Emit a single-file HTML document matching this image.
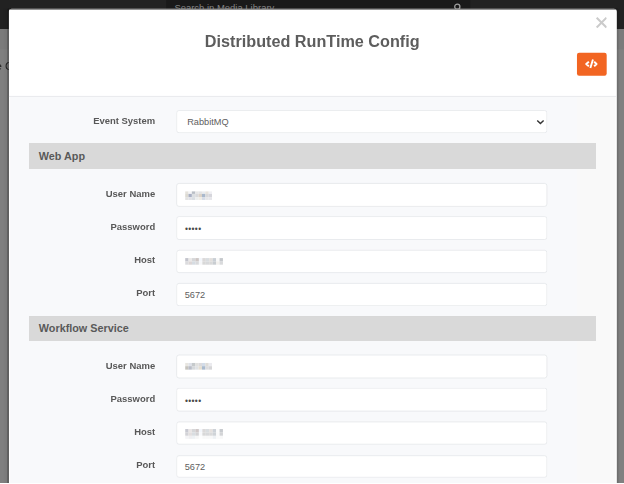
<!DOCTYPE html>
<html lang="en">
<head>
<meta charset="utf-8">
<title>Distributed RunTime Config</title>
<style>
*{box-sizing:border-box;margin:0;padding:0}
html,body{width:624px;height:484px;overflow:hidden}
body{position:relative;background:#808080;font-family:"Liberation Sans",Arial,sans-serif;color:#555}
#wrap{position:absolute;left:0;top:0;width:923.62px;height:716.40px;transform:scale(0.6756);transform-origin:0 0;overflow:hidden}
.abs{position:absolute}
#topbar{left:0;top:0;width:923.62px;height:43px;background:#222}
#subbar{left:0;top:43px;width:923.62px;height:30px;background:#7b7b7b}
#search{left:245.71px;top:0;width:449.97px;height:29.60px;background:#191919;color:#828282;font-size:14.00px;line-height:17.76px}
#search span{position:absolute;left:12.43px;top:2.96px;white-space:nowrap}
#crumb{left:-6.22px;top:86.59px;width:88.81px;text-align:left;font-size:16.28px;line-height:20.72px;color:#1d1d1d;white-space:nowrap}
#shadow{left:4.44px;top:13.32px;width:917.70px;height:703.08px;background:linear-gradient(to right,rgba(0,0,0,0) 0,rgba(0,0,0,.05) 6.51px,rgba(0,0,0,.28) 7.25px,rgba(0,0,0,.28) 8.88px,rgba(0,0,0,0) 8.88px,rgba(0,0,0,0) 908.23px,rgba(0,0,0,.2) 908.53px,rgba(0,0,0,.12) 910.30px,rgba(0,0,0,0) 913.26px)}
#modal{left:13px;top:13px;width:900px;height:710px;background:linear-gradient(to right,#707070 0,#707070 .25px,#fff .4px);border-radius:4.5px 4.5px 0 0;overflow:hidden}
#topedge{left:0;top:0;width:900px;height:1px;background:#1a1a1a}
#shadowtop{left:12px;top:11.6px;width:902px;height:1.4px;background:rgba(0,0,0,.22)}
#body{left:2px;top:130px;width:839px;height:580px;background:#f8f9fb}
#body2{left:841px;top:130px;width:57px;height:580px;background:#f9f9f9}
#hline{left:0;top:129px;width:900px;height:1px;background:#dfe1e4}
#title{left:-0.89px;top:32.56px;width:900px;text-align:center;font-weight:bold;font-size:23.98px;line-height:29.60px;color:#5d5d5d;white-space:nowrap}
#close{left:868.56px;top:11.84px;width:16.87px;height:16.87px}
#codebtn{left:841.03px;top:65.13px;width:43.52px;height:34.19px;background:#f26522;border-radius:3.26px}
.band{left:30px;width:839px;background:#d9d9d9;font-weight:bold;font-size:15.99px;color:#595959;padding-left:14.51px;white-space:nowrap}
.lbl{left:0;width:216.70px;text-align:right;font-weight:bold;font-size:14.00px;line-height:31.38px;color:#585858;white-space:nowrap}
.inp{left:248px;width:549px;background:#fff;border:1px solid #dfe2e6;border-radius:4px}
.val{font-size:13.62px;line-height:17.76px;color:#5e5e5e;white-space:nowrap}
.pw{color:#4a4a4a;font-size:12.43px;letter-spacing:0.55px}
.mos{filter:blur(0.52px)}
#bottomline{left:0;top:483px;width:624px;height:1px;background:#fff}
</style>
</head>
<body>
<div id="wrap">
<div id="topbar" class="abs"></div>
<div id="subbar" class="abs"></div>
<div id="search" class="abs"><span>Search in Media Library</span>
<svg class="abs" style="left:421.85px;top:1.48px;width:17.76px;height:17.76px" viewBox="0 0 12 12"><circle cx="6" cy="6" r="2.6" fill="none" stroke="#9c9c9c" stroke-width="1.3"/><path d="M8 8 L10.5 10.5" stroke="#9c9c9c" stroke-width="1.4"/></svg>
</div>
<div id="crumb" class="abs">e Config</div>
<div id="shadow" class="abs"></div>

<div id="shadowtop" class="abs"></div>
<div id="modal" class="abs">
  <div id="topedge" class="abs"></div>
  <div id="body" class="abs"></div>
  <div id="body2" class="abs"></div>
  <div id="hline" class="abs"></div>
  <div id="title" class="abs">Distributed RunTime Config</div>
  <svg id="close" class="abs" viewBox="0 0 11.4 11.4"><path d="M0.8 0.8 L10.6 10.6 M10.6 0.8 L0.8 10.6" stroke="#cbcbcb" stroke-width="2" fill="none"/></svg>
  <div id="codebtn" class="abs">
    <svg class="abs" style="left:0;top:0;width:43.52px;height:34.19px" viewBox="0 0 29.4 23.1"><path d="M11.9 9.0 L9.2 11.3 L11.9 13.6 M17.2 9.0 L19.6 11.3 L17.2 13.6 M16.0 6.9 L13.4 15.4" stroke="#fff" stroke-width="1.9" fill="none" stroke-linejoin="round"/></svg>
  </div>
  <div class="lbl abs" style="top:149.67px">Event System</div>
  <div class="inp abs" style="top:150px;height:34px"></div>
  <div class="val abs" style="left:264.09px;top:158.70px">RabbitMQ</div>
  <div class="band abs" style="top:199px;height:38px;line-height:40px">Web App</div>
  <div class="lbl abs" style="top:257.87px">User Name</div>
  <div class="inp abs" style="top:258px;height:35px"></div>
  <div class="lbl abs" style="top:306.87px">Password</div>
  <div class="inp abs" style="top:307px;height:35px"></div>
  <div class="val abs pw" style="left:260.69px;top:317.53px">•••••</div>
  <div class="lbl abs" style="top:356.31px">Host</div>
  <div class="inp abs" style="top:357px;height:34px"></div>
  <div class="lbl abs" style="top:405.30px">Port</div>
  <div class="inp abs" style="top:406px;height:34px"></div>
  <div class="val abs" style="left:260.39px;top:414.92px">5672</div>
  <div class="band abs" style="top:455px;height:37px;line-height:37px">Workflow Service</div>
  <div class="lbl abs" style="top:512.76px">User Name</div>
  <div class="inp abs" style="top:512px;height:35px"></div>
  <div class="lbl abs" style="top:561.90px">Password</div>
  <div class="inp abs" style="top:561px;height:35px"></div>
  <div class="val abs pw" style="left:260.69px;top:572.85px">•••••</div>
  <div class="lbl abs" style="top:611.34px">Host</div>
  <div class="inp abs" style="top:611px;height:34px"></div>
  <div class="lbl abs" style="top:659.89px">Port</div>
  <div class="inp abs" style="top:661px;height:33px"></div>
  <div class="val abs" style="left:260.39px;top:668.77px">5672</div>

  <svg class="abs" style="left:780.82px;top:163.74px;width:11.84px;height:8.88px" viewBox="0 0 8 6"><path d="M0.8 0.8 L4 4 L7.2 0.8" stroke="#333" stroke-width="1.4" fill="none"/></svg>
  <svg class="abs mos" style="left:260.83px;top:269.72px;width:39.91px;height:12.88px" viewBox="0 0 26.96 8.70"><rect x="0.00" y="0.00" width="3.42" height="2.75" fill="#e4e2dc"/><rect x="3.37" y="0.00" width="3.42" height="2.75" fill="#f4f4f6"/><rect x="6.74" y="0.00" width="3.42" height="2.75" fill="#b9bec6"/><rect x="10.11" y="0.00" width="3.42" height="2.75" fill="#e6e6e6"/><rect x="13.48" y="0.00" width="3.42" height="2.75" fill="#e3e3e5"/><rect x="16.85" y="0.00" width="3.42" height="2.75" fill="#e9ebee"/><rect x="20.22" y="0.00" width="3.42" height="2.75" fill="#e6e2dc"/><rect x="23.59" y="0.00" width="3.42" height="2.75" fill="#f0f0f4"/><rect x="0.00" y="2.70" width="3.42" height="3.35" fill="#dddbd3"/><rect x="3.37" y="2.70" width="3.42" height="3.35" fill="#a9b0c4"/><rect x="6.74" y="2.70" width="3.42" height="3.35" fill="#dcdfe2"/><rect x="10.11" y="2.70" width="3.42" height="3.35" fill="#d9dadc"/><rect x="13.48" y="2.70" width="3.42" height="3.35" fill="#dcd3c9"/><rect x="16.85" y="2.70" width="3.42" height="3.35" fill="#a9b8cc"/><rect x="20.22" y="2.70" width="3.42" height="3.35" fill="#d8d8da"/><rect x="23.59" y="2.70" width="3.42" height="3.35" fill="#d6d6dc"/><rect x="0.00" y="6.00" width="3.42" height="2.75" fill="#e2e2e2"/><rect x="3.37" y="6.00" width="3.42" height="2.75" fill="#e0e1e6"/><rect x="6.74" y="6.00" width="3.42" height="2.75" fill="#d8dde2"/><rect x="10.11" y="6.00" width="3.42" height="2.75" fill="#eceeed"/><rect x="13.48" y="6.00" width="3.42" height="2.75" fill="#efece6"/><rect x="16.85" y="6.00" width="3.42" height="2.75" fill="#d5dbe6"/><rect x="20.22" y="6.00" width="3.42" height="2.75" fill="#e6e6e8"/><rect x="23.59" y="6.00" width="3.42" height="2.75" fill="#e6e6ea"/></svg>
  <svg class="abs mos" style="left:260.83px;top:369.03px;width:56.08px;height:10.07px" viewBox="0 0 37.89 6.80"><rect x="0.00" y="0.00" width="3.49" height="3.45" fill="#c3c4cc"/><rect x="3.44" y="0.00" width="3.49" height="3.45" fill="#ebe9e8"/><rect x="6.89" y="0.00" width="3.49" height="3.45" fill="#d6d7d9"/><rect x="10.33" y="0.00" width="3.49" height="3.45" fill="#cdc6c4"/><rect x="13.78" y="0.00" width="3.49" height="3.45" fill="#f3f6fb"/><rect x="17.22" y="0.00" width="3.49" height="3.45" fill="#dbd9d9"/><rect x="20.67" y="0.00" width="3.49" height="3.45" fill="#d9dde0"/><rect x="24.11" y="0.00" width="3.49" height="3.45" fill="#e3dfdc"/><rect x="27.56" y="0.00" width="3.49" height="3.45" fill="#c9cfd5"/><rect x="31.00" y="0.00" width="3.49" height="3.45" fill="#fafafa"/><rect x="34.45" y="0.00" width="3.49" height="3.45" fill="#c5c8cc"/><rect x="0.00" y="3.40" width="3.49" height="3.45" fill="#dcdcde"/><rect x="3.44" y="3.40" width="3.49" height="3.45" fill="#dcd6d6"/><rect x="6.89" y="3.40" width="3.49" height="3.45" fill="#d6dce2"/><rect x="10.33" y="3.40" width="3.49" height="3.45" fill="#d9dadc"/><rect x="13.78" y="3.40" width="3.49" height="3.45" fill="#f6f7f9"/><rect x="17.22" y="3.40" width="3.49" height="3.45" fill="#d8d8d8"/><rect x="20.67" y="3.40" width="3.49" height="3.45" fill="#d8d9db"/><rect x="24.11" y="3.40" width="3.49" height="3.45" fill="#d9d9d9"/><rect x="27.56" y="3.40" width="3.49" height="3.45" fill="#c9cdd1"/><rect x="31.00" y="3.40" width="3.49" height="3.45" fill="#f3f1ee"/><rect x="34.45" y="3.40" width="3.49" height="3.45" fill="#d9dadc"/></svg>
  <svg class="abs mos" style="left:260.83px;top:524.45px;width:39.91px;height:10.07px" viewBox="0 0 26.96 6.80"><rect x="0.00" y="0.00" width="3.42" height="3.45" fill="#e8e6e1"/><rect x="3.37" y="0.00" width="3.42" height="3.45" fill="#dfe2e9"/><rect x="6.74" y="0.00" width="3.42" height="3.45" fill="#c6cacc"/><rect x="10.11" y="0.00" width="3.42" height="3.45" fill="#e1e1df"/><rect x="13.48" y="0.00" width="3.42" height="3.45" fill="#dcdbdd"/><rect x="16.85" y="0.00" width="3.42" height="3.45" fill="#d3dce8"/><rect x="20.22" y="0.00" width="3.42" height="3.45" fill="#dedcd8"/><rect x="23.59" y="0.00" width="3.42" height="3.45" fill="#ebebef"/><rect x="0.00" y="3.40" width="3.42" height="3.45" fill="#c6c4be"/><rect x="3.37" y="3.40" width="3.42" height="3.45" fill="#b9bdc8"/><rect x="6.74" y="3.40" width="3.42" height="3.45" fill="#d6d9dc"/><rect x="10.11" y="3.40" width="3.42" height="3.45" fill="#dfe2e5"/><rect x="13.48" y="3.40" width="3.42" height="3.45" fill="#e6dfd2"/><rect x="16.85" y="3.40" width="3.42" height="3.45" fill="#a9bace"/><rect x="20.22" y="3.40" width="3.42" height="3.45" fill="#dcdcde"/><rect x="23.59" y="3.40" width="3.42" height="3.45" fill="#d6d6d8"/></svg>
  <svg class="abs mos" style="left:260.83px;top:622.14px;width:56.08px;height:14.51px" viewBox="0 0 37.89 9.80"><rect x="0.00" y="0.00" width="3.49" height="3.45" fill="#c8c9d1"/><rect x="3.44" y="0.00" width="3.49" height="3.45" fill="#eae6e6"/><rect x="6.89" y="0.00" width="3.49" height="3.45" fill="#d6d7d9"/><rect x="10.33" y="0.00" width="3.49" height="3.45" fill="#cfc8c8"/><rect x="13.78" y="0.00" width="3.49" height="3.45" fill="#f3f6fb"/><rect x="17.22" y="0.00" width="3.49" height="3.45" fill="#dbd9d9"/><rect x="20.67" y="0.00" width="3.49" height="3.45" fill="#d9dde0"/><rect x="24.11" y="0.00" width="3.49" height="3.45" fill="#e6e1de"/><rect x="27.56" y="0.00" width="3.49" height="3.45" fill="#cdd2d8"/><rect x="31.00" y="0.00" width="3.49" height="3.45" fill="#fcfcfc"/><rect x="34.45" y="0.00" width="3.49" height="3.45" fill="#c8cbcf"/><rect x="0.00" y="3.40" width="3.49" height="3.45" fill="#d3d3d7"/><rect x="3.44" y="3.40" width="3.49" height="3.45" fill="#e3dfdf"/><rect x="6.89" y="3.40" width="3.49" height="3.45" fill="#d9dde1"/><rect x="10.33" y="3.40" width="3.49" height="3.45" fill="#d3d3d5"/><rect x="13.78" y="3.40" width="3.49" height="3.45" fill="#f8f9fb"/><rect x="17.22" y="3.40" width="3.49" height="3.45" fill="#d8d8d8"/><rect x="20.67" y="3.40" width="3.49" height="3.45" fill="#d8d9db"/><rect x="24.11" y="3.40" width="3.49" height="3.45" fill="#dadada"/><rect x="27.56" y="3.40" width="3.49" height="3.45" fill="#cfd3d7"/><rect x="31.00" y="3.40" width="3.49" height="3.45" fill="#fafafa"/><rect x="34.45" y="3.40" width="3.49" height="3.45" fill="#d3d4d6"/><rect x="0.00" y="6.80" width="3.49" height="3.05" fill="#f4f4f6"/><rect x="3.44" y="6.80" width="3.49" height="3.05" fill="#efeff1"/><rect x="6.89" y="6.80" width="3.49" height="3.05" fill="#eef1f4"/><rect x="10.33" y="6.80" width="3.49" height="3.05" fill="#f6f6f6"/><rect x="13.78" y="6.80" width="3.49" height="3.05" fill="#fdfdfd"/><rect x="17.22" y="6.80" width="3.49" height="3.05" fill="#f8f8f8"/><rect x="20.67" y="6.80" width="3.49" height="3.05" fill="#f8f8f8"/><rect x="24.11" y="6.80" width="3.49" height="3.05" fill="#f8f8f8"/><rect x="27.56" y="6.80" width="3.49" height="3.05" fill="#eef1f4"/><rect x="31.00" y="6.80" width="3.49" height="3.05" fill="#fafafa"/><rect x="34.45" y="6.80" width="3.49" height="3.05" fill="#f8f8f8"/></svg>
</div>
</div>
<div id="bottomline" class="abs"></div>
</body>
</html>
